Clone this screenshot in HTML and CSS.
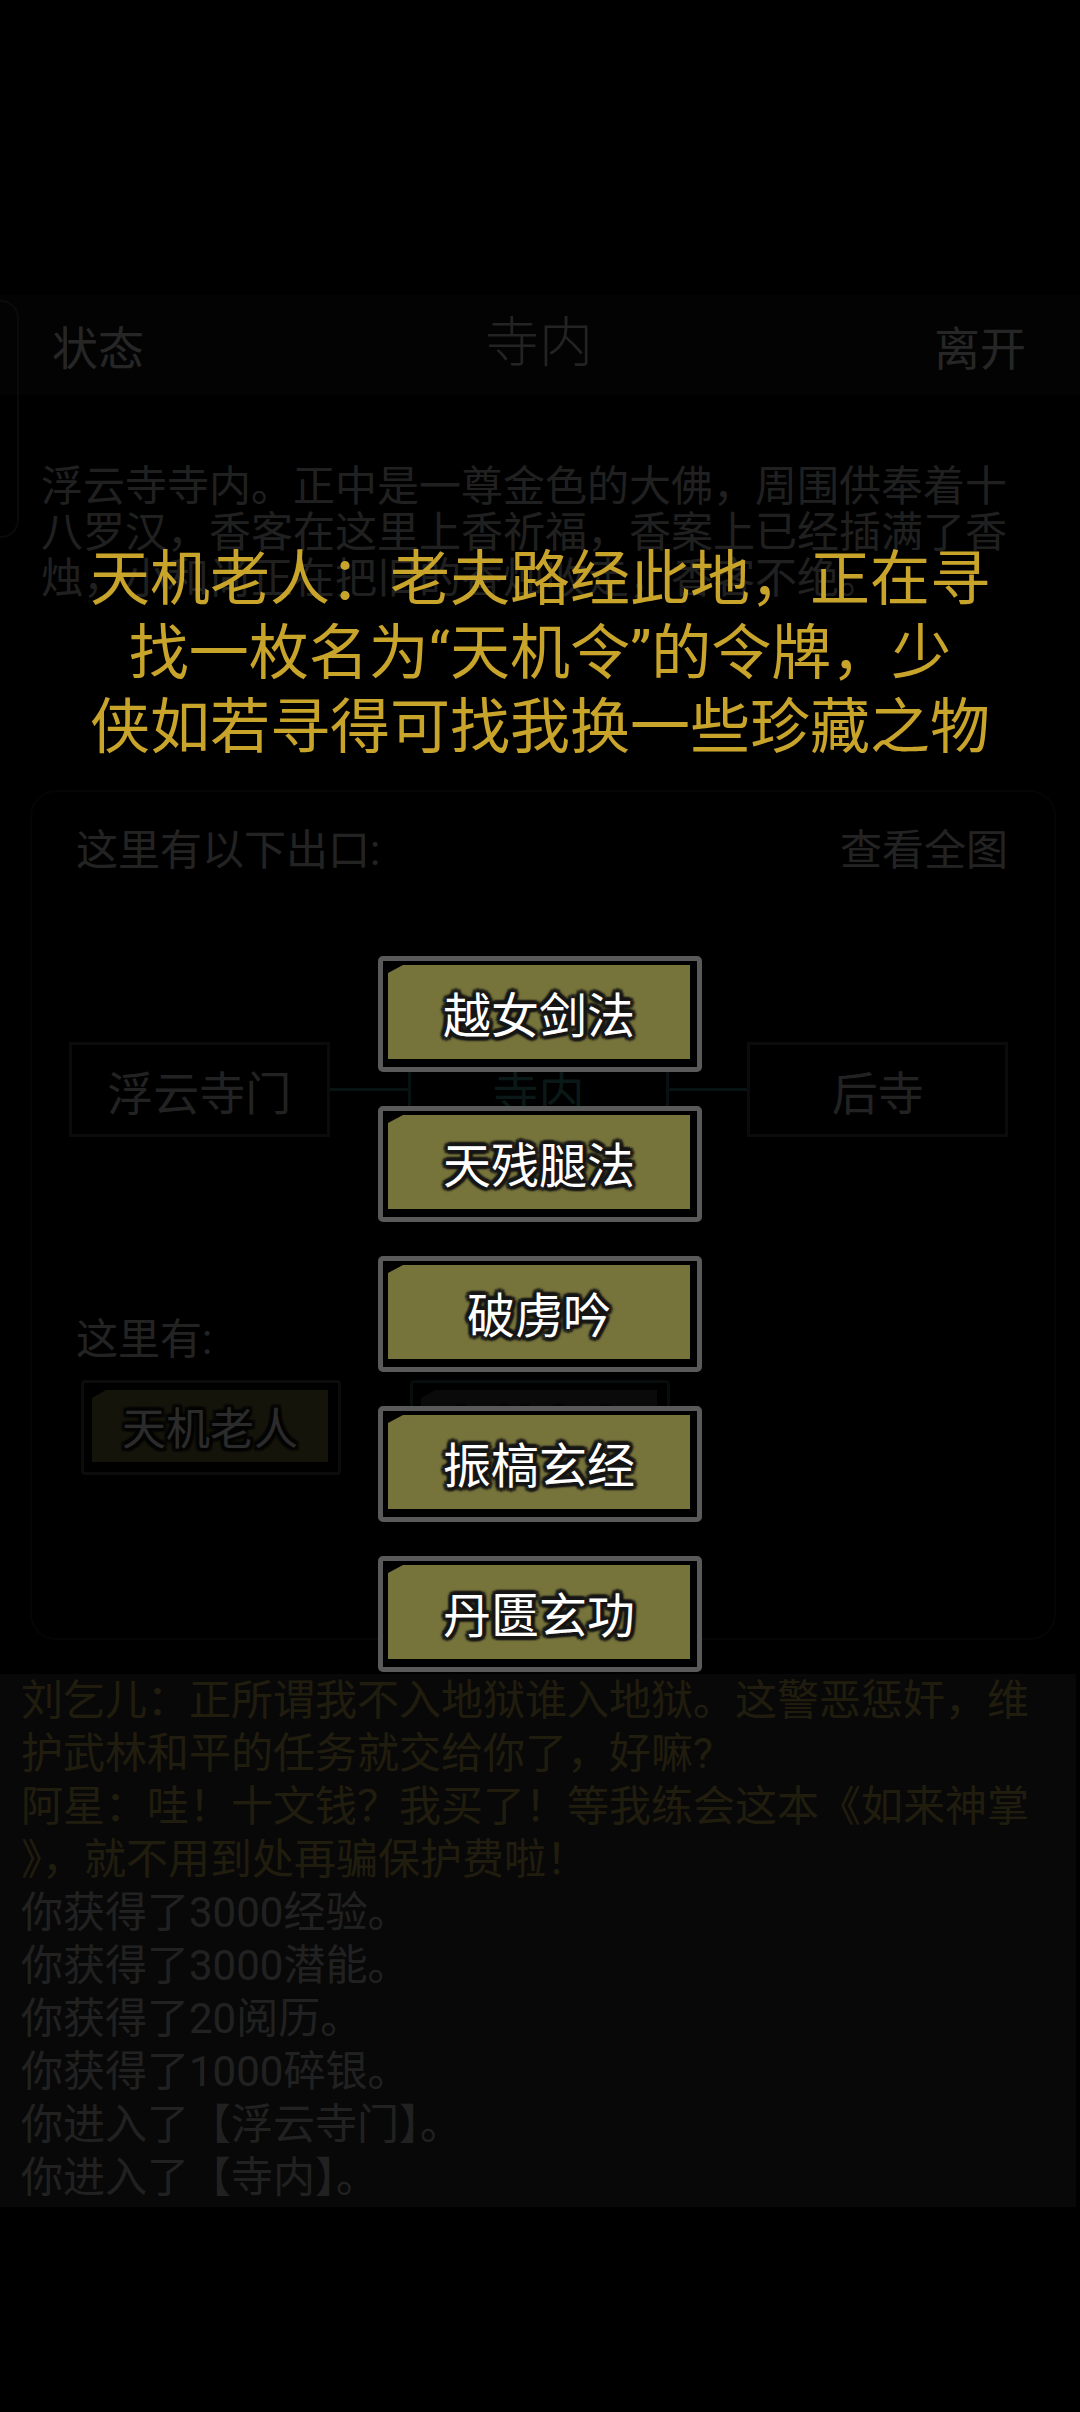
FILE: index.html
```html
<!DOCTYPE html>
<html lang="zh-CN">
<head>
    <meta charset="UTF-8">
    <meta name="viewport" content="width=device-width,user-scalable=no"/>
    <title>寺内</title>
    <link rel="stylesheet" href="styles.css">
</head>
<body>
    <div class="page">
        <div class="side-tab"></div>
        <header class="topbar">
            <span class="top-btn">状态</span>
            <span class="title">寺内</span>
            <span class="top-btn">离开</span>
        </header>
        <p class="desc">浮云寺寺内。正中是一尊金色的大佛，周围供奉着十八罗汉，香客在这里上香祈福，香案上已经插满了香烛，小和尚正在把旧的香烛收走，香客不绝。</p>

        <section class="room">
            <div class="room-head">
                <span>这里有以下出口:</span>
                <span>查看全图</span>
            </div>
            <div class="map">
                <div class="place">浮云寺门</div>
                <div class="link"></div>
                <div class="place here">寺内</div>
                <div class="link"></div>
                <div class="place">后寺</div>
            </div>
            <div class="room-sub">这里有:</div>
            <div class="npcs">
                <div class="npc"><div class="npc-face">天机老人</div></div>
                <div class="npc npc-grey"><div class="npc-face">扫地老人</div></div>
            </div>
        </section>

        <section class="log">
            <p class="talk">刘乞儿：正所谓我不入地狱谁入地狱。这警恶惩奸，维<br>护武林和平的任务就交给你了，好嘛?</p>
            <p class="talk">阿星：哇！十文钱？我买了！等我练会这本《如来神掌<br>》，就不用到处再骗保护费啦！</p>
            <p>你获得了3000经验。</p>
            <p>你获得了3000潜能。</p>
            <p>你获得了20阅历。</p>
            <p>你获得了1000碎银。</p>
            <p>你进入了【浮云寺门】。</p>
            <p>你进入了【寺内】。</p>
        </section>
    </div>

    <div class="mask"></div>

    <div class="dialog">
        <p class="say">天机老人：老夫路经此地，正在寻<br>找一枚名为“天机令”的令牌，少<br>侠如若寻得可找我换一些珍藏之物</p>
        <div class="choices">
            <a href="javascript:;" class="choice"><span class="face">越女剑法</span></a>
            <a href="javascript:;" class="choice"><span class="face">天残腿法</span></a>
            <a href="javascript:;" class="choice"><span class="face">破虏吟</span></a>
            <a href="javascript:;" class="choice"><span class="face">振槁玄经</span></a>
            <a href="javascript:;" class="choice"><span class="face">丹匮玄功</span></a>
        </div>
    </div>
</body>
</html>
```

FILE: styles.css
```css
*{
    margin: 0;
    padding: 0;
    box-sizing: border-box;
}
html,body{
    width: 1080px;
    height: 2412px;
    background: #000;
    overflow: hidden;
}
body{
    font-family: Roboto, "Noto Sans CJK SC", sans-serif;
    color: #ddd;
}
a{
    text-decoration: none;
}

/* page under the popup */
.page{
    position: relative;
    padding-top: 295px;
}
.side-tab{
    position: absolute;
    left: -22px;
    top: 300px;
    width: 41px;
    height: 238px;
    border: 2px solid #3a3a3a;
    border-radius: 18px;
}
.topbar{
    height: 100px;
    padding: 0 54px 0 52px;
    display: flex;
    justify-content: space-between;
    align-items: center;
    background: #111;
}
.top-btn{
    font-size: 46px;
    color: #cfcfcf;
}
.title{
    font-size: 54px;
    font-weight: 300;
    color: #c4c4c4;
    margin-top: -14px;
}
.desc{
    width: 1010px;
    margin-top: 69px;
    padding-left: 41px;
    font-size: 42px;
    line-height: 46px;
    color: #b0b0b0;
}

.room{
    margin: 188px 24px 0 30px;
    padding: 36px 46px 163px 44px;
    border: 2px solid #1c1c1c;
    border-radius: 26px;
}
.room-head{
    display: flex;
    justify-content: space-between;
    font-size: 42px;
    line-height: 46px;
    color: #c4c4c4;
}
.map{
    margin: 168px 0 0 -7px;
    display: flex;
    align-items: center;
}
.place{
    width: 262px;
    height: 95px;
    border: 3px solid #3e3e3e;
    display: flex;
    justify-content: center;
    align-items: center;
    font-size: 46px;
    color: #bdbdbd;
}
.place.here{
    border-color: #2a6262;
    color: #3a8585;
}
.link{
    width: 79px;
    height: 3px;
    background: #2a6868;
}
.room-sub{
    margin-top: 180px;
    font-size: 42px;
    line-height: 46px;
    color: #c4c4c4;
}
.npcs{
    margin: 17px 0 0 5px;
    display: flex;
    gap: 69px;
}
.npc{
    width: 260px;
    height: 95px;
    border: 3px solid #454545;
    border-radius: 4px;
    padding: 7px 10px 10px 8px;
}
.npc-face{
    height: 100%;
    background: #74713a;
    clip-path: polygon(14px 0, 100% 0, 100% 100%, 0 100%, 0 8px);
    display: flex;
    justify-content: center;
    align-items: center;
    font-size: 44px;
    color: #eee;
    text-shadow: -3px -3px 2px #111, 3px -3px 2px #111, -3px 3px 2px #111, 3px 3px 2px #111, 0 -3px 2px #111, 0 3px 2px #111, -3px 0 2px #111, 3px 0 2px #111;
}
.npc-grey{
    border-color: #2a4444;
}
.npc-grey .npc-face{
    background: #383838;
    color: #9a9a9a;
}

.log{
    width: 1076px;
    margin-top: 34px;
    padding: 0 0 3px 21px;
    background: #2e2e2e;
    font-size: 42px;
    line-height: 53px;
    color: #b8b8b8;
}
.log .talk{
    color: #b89e4e;
}

/* popup */
.mask{
    position: fixed;
    left: 0;
    top: 0;
    width: 1080px;
    height: 2412px;
    background: rgba(0,0,0,.82);
}
.dialog{
    position: fixed;
    left: 0;
    top: 0;
    width: 1080px;
    height: 2412px;
    padding-top: 543px;
    display: flex;
    flex-direction: column;
    align-items: center;
}
.say{
    font-size: 60px;
    line-height: 74px;
    text-align: center;
    color: #c9a42b;
}
.choices{
    margin-top: 191px;
    display: flex;
    flex-direction: column;
    gap: 34px;
}
.choice{
    display: block;
    width: 324px;
    height: 116px;
    border: 5px solid #5a5a5a;
    border-radius: 5px;
    background: #000;
    padding: 4px 7px 8px 5px;
}
.face{
    height: 100%;
    background: #77743b;
    clip-path: polygon(15px 0, 100% 0, 100% 100%, 0 100%, 0 8px);
    display: flex;
    justify-content: center;
    align-items: center;
    font-size: 48px;
    color: #fff;
    text-shadow: -3px -3px 2px #161616, 3px -3px 2px #161616, -3px 3px 2px #161616, 3px 3px 2px #161616, 0 -4px 2px #161616, 0 4px 2px #161616, -4px 0 2px #161616, 4px 0 2px #161616;
}
```
